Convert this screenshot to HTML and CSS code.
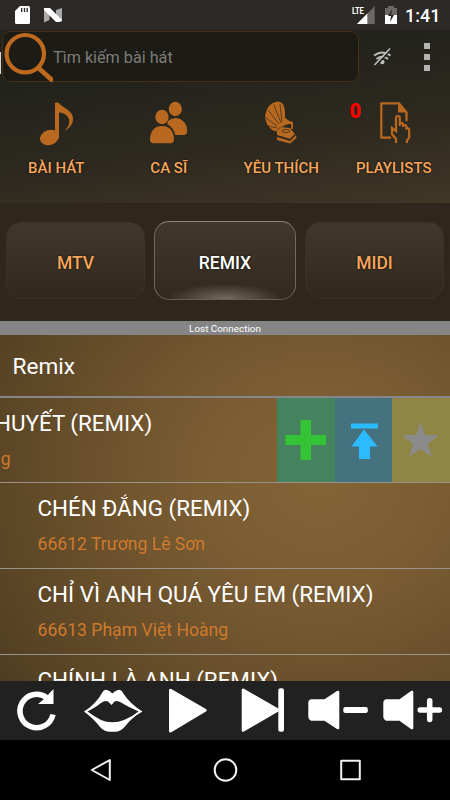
FILE: index.html
```
<!DOCTYPE html>
<html lang="vi">
<head>
  <meta charset="UTF-8">
  <title>Karaoke Remix</title>
  <link rel="stylesheet" href="styles.css">
</head>
<body>
  <div class="status-bar">
    <svg class="status-left" width="70" height="30" viewBox="0 0 70 30">
      <path fill="#fff" d="M20 6h8.500q1.500 0 1.500 1.500v15q0 1.500-1.500 1.500h-12q-1.500 0-1.500-1.500V11z"/>
      <path stroke="#2d2926" stroke-width="1.300" d="M21.700 8v4M24.500 8v4M27.200 8v4"/>
      <path fill="#aaa" d="M44 9l5.500 3v8L44 22.500zM56 10l6-2v14l-6-5z"/>
      <path fill="#fff" d="M44 8h6l12 12-2 2h-4L44 10z"/>
    </svg>
    <svg class="status-right" width="50" height="30" viewBox="350 0 50 30">
      <path fill="#6b6866" d="M374.700 6v18H357z"/>
      <path fill="#fff" d="M367.300 13.500V24H357z"/>
      <path fill="#6b6866" d="M385 8h3V6h6v2h3v8h-12z"/>
      <path fill="#fff" d="M385 15h12v9h-12z"/>
      <path fill="#2d2926" d="M392 9l-4 7h3l-1 6 4-7h-3z"/>
    </svg>
    <span class="lte">LTE</span>
    <span class="clock">1:41</span>
  </div>

  <header class="header">
    <div class="search-row">
      <div class="drawer-edge"></div>
      <div class="search-box">
        <svg width="51" height="51" viewBox="2 31 51 51" fill="none" stroke="#bd6a1f">
          <circle cx="25.300" cy="53.700" r="18.700" stroke-width="4.200"/>
          <path stroke-width="4.800" d="M38 67.500l15 13.500"/>
        </svg>
        <span>Tìm kiếm bài hát</span>
      </div>
      <svg class="wifi-off" width="20" height="20" viewBox="372 47 20 20" fill="none" stroke="#bbb" stroke-width="2">
        <path d="M374 55.500q8.500-6 16.500 0M376.500 59q5.800-4.500 11.500 0"/>
        <circle cx="382.300" cy="62" r="2.300" fill="#bbb" stroke="none"/>
        <path stroke="#22221c" stroke-width="1.300" d="M376.500 65.500l15-16.500"/>
        <path stroke-width="1.700" d="M374.500 65l15.500-16.500"/>
      </svg>
      <div class="dots"><i></i><i></i><i></i></div>
    </div>

    <nav class="menu">
      <a class="menu-item">
        <svg width="56" height="56" viewBox="0 0 56 56" fill="#b9691f">
          <path d="M27 8q2-1 4 0c2 4 14 7 14 15.500 0 6-4 10-8.500 12.500 4-4 5.500-8 4.500-12-2-5-7-6.500-10-6.500V43h-4z"/>
          <ellipse cx="21.500" cy="42.500" rx="9.800" ry="7.500" transform="rotate(-20 21.500 42.500)"/>
        </svg>
        <span>BÀI HÁT</span>
      </a>
      <a class="menu-item">
        <svg width="56" height="56" viewBox="0 0 56 56" fill="#b9691f">
          <ellipse cx="34.300" cy="14" rx="6.600" ry="7.200"/>
          <path d="M27 26q5-4.500 11-2.500 8 3 8.200 12.500 0 4-4 4h-8q-1.500-7-8-11z"/>
          <ellipse cx="21" cy="22" rx="6.700" ry="7.200"/>
          <path d="M9 43q1.500-12 12-12t12 12q.3 5.300-3.500 5.300h-17q-3.800 0-3.500-5.300z"/>
        </svg>
        <span>CA SĨ</span>
      </a>
      <a class="menu-item">
        <svg width="56" height="56" viewBox="0 0 56 56" fill="#b9691f">
          <path d="M20 8q6-3.500 10 1 2.500 5 2 13-.5 10-8 14.500-4.500-.5-7.500-4-3-3-4-8-1-5 1-9 2-5.500 6.500-7.500z"/>
          <path d="M31 21q3 5 9 6v7h-1.800v-5q-5-.5-9.200 3z"/>
          <path d="M24 36l3-4 10 1 5 6-5 5-13-4zM24 42l13 4 6-6 .5 3-6.500 5.500L24 45z"/>
          <g fill="none" stroke="#2c281f" stroke-width="0.700">
            <path d="M28 28L21 10M29 27l-2-18M26 29L15 15M24 31l-11-8M24 33l-9-2"/>
            <path d="M24 35.500l4-4M24 41l13 3.500 6-6"/>
            <ellipse cx="33" cy="36" rx="4" ry="1.500"/>
          </g>
        </svg>
        <span>YÊU THÍCH</span>
      </a>
      <a class="menu-item">
        <b class="badge">0</b>
        <svg width="56" height="56" viewBox="0 0 56 56" fill="none" stroke="#b9691f" stroke-width="2.200">
          <path d="M25 42.700h-9.700V8.300H33l7.500 9v9"/>
          <path fill="#b9691f" stroke-width="1" d="M32.500 8l8.500 9h-8.500z"/>
          <path d="M30 48v-4l-4-5v-6l4 3V23q0-2 1.900-2t1.900 2v8V28.500q3.300-1.500 3.300 1V32v-1.500q3.300-1 3.300 1.500v1.500q3-1 2.800 2v7l-2.300 3v2.500"/>
        </svg>
        <span>PLAYLISTS</span>
      </a>
    </nav>
  </header>

  <div class="tabs">
    <button class="tab">MTV</button>
    <button class="tab active">REMIX</button>
    <button class="tab">MIDI</button>
  </div>

  <div class="connection">Lost Connection</div>

  <main class="songs">
    <h1>Remix</h1>
    <ul>
      <li class="song swiped">
        <div class="song-info">
          <p class="name">HUYẾT (REMIX)</p>
          <p class="singer">ng</p>
        </div>
        <div class="actions">
          <div class="action add">
            <svg width="58" height="84" viewBox="0 0 58 84"><path fill="#34c334" d="M23.500 22h10.500v15h15v10H34v15H23.500V47h-15V37h15z"/></svg>
          </div>
          <div class="action first">
            <svg width="58" height="84" viewBox="0 0 58 84"><path fill="#2dbbff" d="M16 25.500h27v5H16zM29 31.500l13.500 17h-7.500V61H24V48.500h-7.500z"/></svg>
          </div>
          <div class="action favorite">
            <svg width="58" height="84" viewBox="0 0 58 84"><path fill="#8b8b8b" d="M28.500 24l4.500 13 14 .2-11 8.600 4 13.200-11.500-8-11.500 8 4-13.200-11-8.600 14-.2z"/></svg>
          </div>
        </div>
      </li>
      <li class="song">
        <div class="song-info">
          <p class="name">CHÉN ĐẮNG (REMIX)</p>
          <p class="singer">66612 Trương Lê Sơn</p>
        </div>
      </li>
      <li class="song">
        <div class="song-info">
          <p class="name">CHỈ VÌ ANH QUÁ YÊU EM (REMIX)</p>
          <p class="singer">66613 Phạm Việt Hoàng</p>
        </div>
      </li>
      <li class="song">
        <div class="song-info">
          <p class="name">CHÍNH LÀ ANH (REMIX)</p>
        </div>
      </li>
    </ul>
  </main>

  <footer class="player">
    <svg viewBox="0 0 75 59">
      <path fill="none" stroke="#fff" stroke-width="5.500" d="M53 33.500A16.700 16.700 0 1 1 46.500 16.500"/>
      <path fill="#fff" d="M53.500 8v15H38l6-5z"/>
    </svg>
    <svg viewBox="0 0 75 59">
      <path fill="#fff" fill-rule="evenodd" d="M9 30.500Q21 23 27 12q2-4 5-3 3 .5 5.300 3.500Q40 9.500 43 9q3-1 5 3 7 11 19.500 18.500-11 6-18 15.500-4 4.700-9.500 4.700h-5q-6 0-10-4.700-6-8-16-15.500zM12.500 30.500Q20 36 26 39q5 2.300 11.300 2.300T49 39Q57 36 63.500 30.500 52 25 47 22q-5-3-7.500-1.500L36.500 24 33 20.500q-3-1.500-7 1.500-5 4-13.500 8.500z"/>
    </svg>
    <svg viewBox="0 0 75 59">
      <path fill="#fff" stroke="#fff" stroke-width="3" stroke-linejoin="round" d="M20.500 9.200v40.800L55.200 29.300z"/>
    </svg>
    <svg viewBox="0 0 75 59">
      <path fill="#fff" stroke="#fff" stroke-width="3" stroke-linejoin="round" d="M18.200 9v40.200L53 29z"/>
      <rect x="53.300" y="7.300" width="5.700" height="43.500" rx="2" fill="#fff"/>
    </svg>
    <svg viewBox="0 0 75 59">
      <path fill="#fff" d="M11 18.300h13.500L37 10q2.300-1 2.300 1v36q0 2-2.300 1l-12.500-8.300H11q-2.700-1-2.700-4V22q0-3 2.700-3.700z"/>
      <rect x="43.300" y="26" width="24.500" height="6" rx="2" fill="#fff"/>
    </svg>
    <svg viewBox="0 0 75 59">
      <path fill="#fff" d="M11 18.300h13.500L36 10q2.300-1 2.300 1v36q0 2-2.300 1l-11.500-8.300H11q-2.700-1-2.700-4V22q0-3 2.700-3.700z"/>
      <path fill="none" stroke="#fff" stroke-width="5.500" stroke-linecap="round" d="M45.200 29h19.200M54.700 19.800v18.700"/>
    </svg>
  </footer>

  <div class="nav-bar">
    <svg viewBox="0 0 125 60"><path d="M53.800 30l18-10v20z"/></svg>
    <svg viewBox="0 0 125 60"><circle cx="62.500" cy="30" r="10.800"/></svg>
    <svg viewBox="0 0 125 60"><rect x="53.200" y="20.700" width="18.600" height="18.600"/></svg>
  </div>
</body>
</html>
```
FILE: styles.css
```
* {
  box-sizing: border-box;
}

body {
  margin: 0;
  width: 450px;
  height: 800px;
  overflow: hidden;
  display: flex;
  flex-direction: column;
  background-color: #000;
  font-family: Roboto, "Liberation Sans", sans-serif;
}

svg {
  display: block;
}

.status-bar {
  position: relative;
  flex: none;
  height: 30px;
  display: flex;
  align-items: center;
  background-color: #2d2926;
  color: #fff;
}

.status-right {
  margin-left: 280px;
}

.lte {
  position: absolute;
  left: 352px;
  top: 5px;
  font-size: 9.5px;
  line-height: 11px;
  font-weight: bold;
  letter-spacing: -0.3px;
  transform: scaleX(0.8);
  transform-origin: left;
}

.clock {
  margin-left: 5px;
  font-size: 18px;
  font-weight: 500;
}

.header {
  flex: none;
  height: 173px;
  background: linear-gradient(172deg, #22231c 25%, #2d291f 62%, #413626);
}

.search-row {
  height: 53px;
  display: flex;
  align-items: center;
}

.drawer-edge {
  width: 1px;
  height: 22px;
  margin-top: 13px;
  margin-right: 1px;
  background-color: #d5d5d3;
}

.search-box {
  width: 357px;
  height: 51px;
  display: flex;
  align-items: center;
  border: 1px solid #492d14;
  border-radius: 8px;
  background-color: #1c1b16;
  color: #7d7c79;
  font-size: 16.2px;
}

.search-box svg {
  margin-left: -1px;
}

.search-box span {
  padding-top: 2px;
}

.wifi-off {
  margin-left: 13px;
}

.dots {
  margin-left: 32px;
  display: flex;
  flex-direction: column;
  gap: 5px;
}

.dots i {
  width: 6px;
  height: 6px;
  background-color: #b5b4b2;
}

.menu {
  display: grid;
  grid-template-columns: repeat(4, 1fr);
  padding-top: 12px;
}

.menu-item {
  position: relative;
  display: flex;
  flex-direction: column;
  align-items: center;
  gap: 7px;
  color: #f9a75c;
  font-size: 15px;
  line-height: 20px;
  font-weight: 500;
  text-shadow: 0 0 2px #000;
}

.badge {
  position: absolute;
  left: 12px;
  top: 6px;
  color: #f00;
  font-size: 20px;
  font-weight: 900;
  text-shadow: none;
}

.tabs {
  flex: none;
  height: 118px;
  display: flex;
  align-items: center;
  gap: 9px;
  padding: 0 5px 3px 6px;
  background-color: #30271c;
}

.tab {
  width: 139px;
  height: 77px;
  padding-top: 5px;
  border: 1px solid #3b3226;
  border-radius: 15px;
  background: linear-gradient(#41382c, #32291e);
  color: #f9a75c;
  font-family: inherit;
  font-size: 17.5px;
  font-weight: 500;
  text-shadow: 0 0 2px #000;
}

.tab.active {
  width: 142px;
  height: 79px;
  border-color: #8b847b #716a61 #665f56;
  background: radial-gradient(ellipse 58px 15px at 50% 100%, #736b60, transparent), linear-gradient(#41382c, #33291f);
  color: #fff;
}

.connection {
  flex: none;
  height: 14px;
  background-color: #858585;
  color: #fff;
  font-size: 9.9px;
  line-height: 15px;
  text-align: center;
}

.songs {
  flex: none;
  height: 346px;
  overflow: hidden;
  background: radial-gradient(ellipse 390px 340px at 320px 145px, #836437, #7b5d33 30%, #69502b 62%, #503d22);
}

.songs h1 {
  height: 62.500px;
  margin: 0;
  padding-left: 12.500px;
  border-bottom: 2.500px solid #87868a;
  color: #fff;
  font-size: 22.6px;
  line-height: 63px;
  font-weight: 400;
}

.songs ul {
  margin: 0;
  padding: 0;
  list-style: none;
}

.song {
  height: 85.700px;
  display: flex;
  justify-content: space-between;
  border-bottom: 1px solid #999389;
  white-space: nowrap;
}

.song-info {
  padding: 10px 0 0 37.500px;
}

.song p {
  margin: 0;
}

.song .name {
  color: #fff;
  font-size: 22.4px;
  line-height: 30px;
}

.song .singer {
  margin-top: 10px;
  color: #ce7a2e;
  font-size: 17.6px;
  line-height: 22px;
}

.swiped .song-info {
  padding-left: 0;
}

.swiped .name {
  margin-left: -5px;
}

.swiped .singer {
  margin-left: -9px;
}

.actions {
  display: flex;
}

.action {
  width: 57.700px;
}

.add {
  background-color: #44835d;
}

.first {
  background-color: #44737f;
}

.favorite {
  background-color: #8f8545;
}

.player {
  flex: none;
  height: 59px;
  display: grid;
  grid-template-columns: repeat(6, 75px);
  background-color: #212121;
}

.nav-bar {
  flex: none;
  height: 60px;
  display: grid;
  grid-template-columns: repeat(3, 125px);
  justify-content: center;
  background-color: #000;
}

.nav-bar svg {
  fill: none;
  stroke: #f2f2f2;
  stroke-width: 2;
  stroke-linejoin: round;
}
```
